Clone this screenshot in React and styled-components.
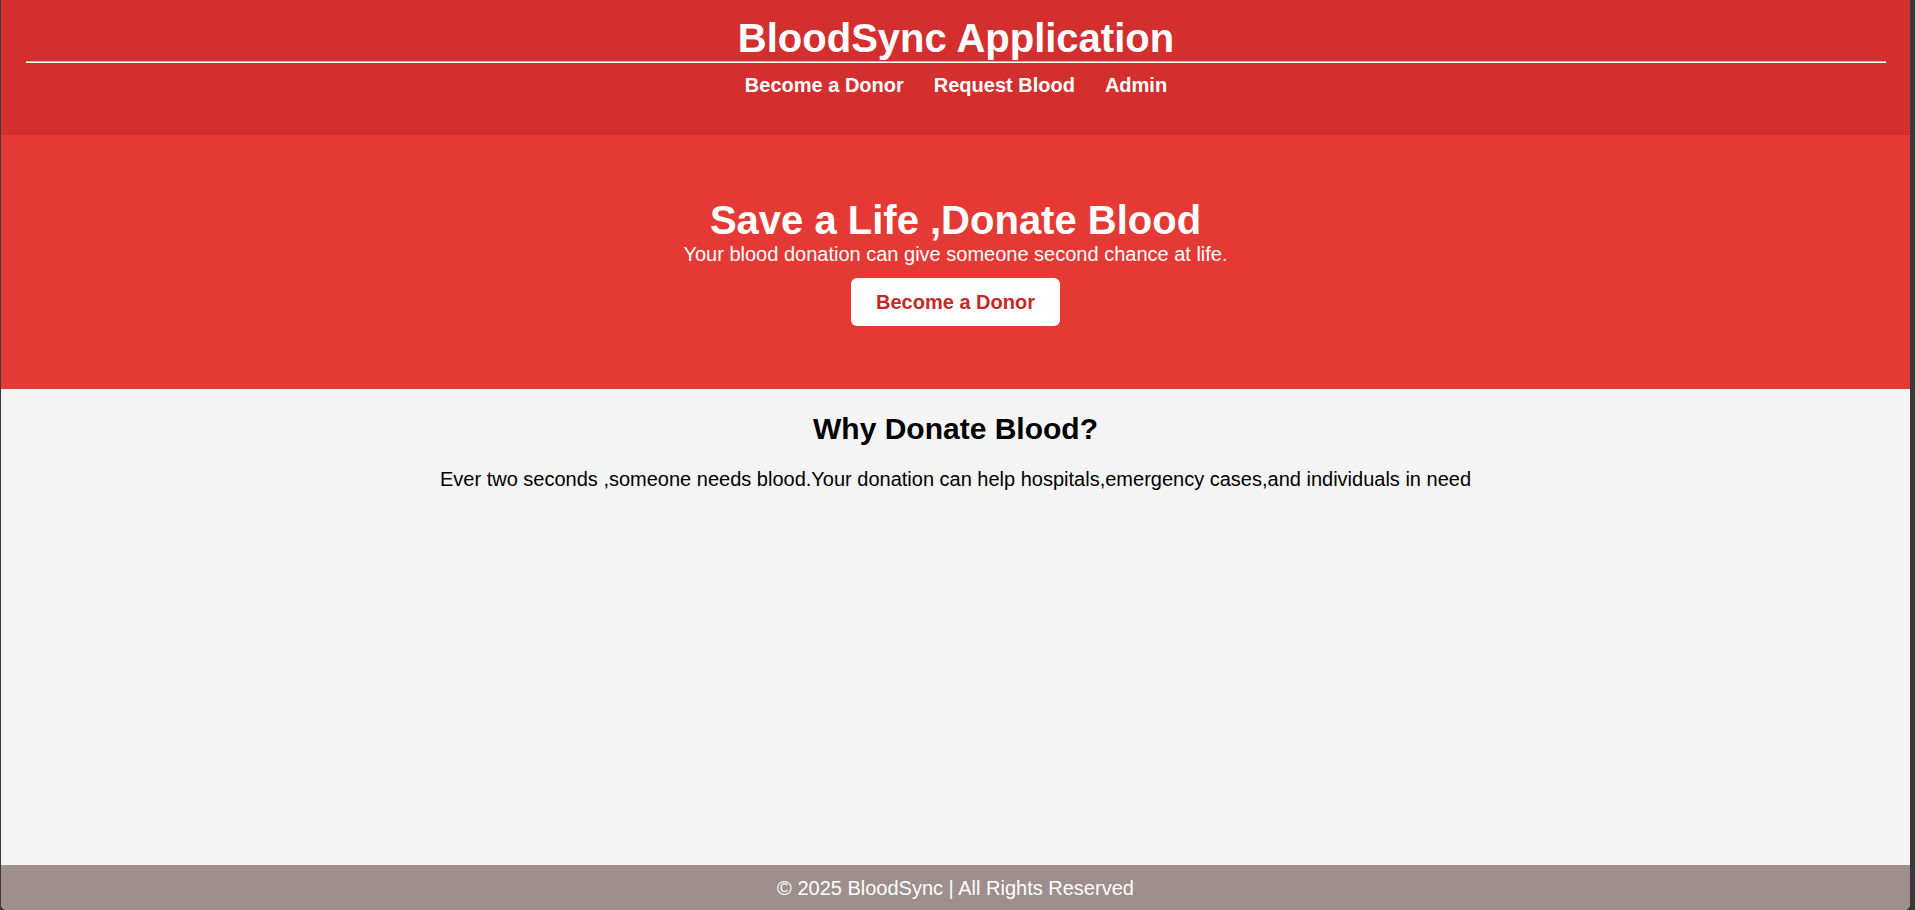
import styled, { createGlobalStyle } from 'styled-components';

const GlobalStyle = createGlobalStyle`
  * {
    box-sizing: border-box;
  }

  html, body {
    margin: 0;
    padding: 0;
    background-color: #3a3a3a;
  }

  body {
    font-family: "Liberation Sans", Arial, sans-serif;
  }
`;

const Page = styled.div`
  display: flex;
  flex-direction: column;
  height: 910px;
  margin: 0 5px 0 1px;
  overflow: hidden;
  border-bottom-left-radius: 6px;
  border-bottom-right-radius: 6px;
  background-color: #f4f4f4;
`;

const Header = styled.header`
  background-color: #d32f2f;
  color: #ffffff;
  padding: 15px 24px 38px 25px;
  text-align: center;
`;

const Title = styled.h1`
  margin: 0;
  font-size: 40px;
  font-weight: bold;
  line-height: 46px;
`;

const Divider = styled.hr`
  margin: 0;
  height: 0;
  border: none;
  border-top: 1px solid #c9b9b9;
  border-bottom: 1px solid #fafafa;
`;

const Nav = styled.nav`
  display: flex;
  justify-content: center;
  gap: 30px;
  margin-top: 11px;
`;

const NavLink = styled.a`
  color: #ffffff;
  font-size: 20px;
  font-weight: bold;
  line-height: 23px;
  text-decoration: none;
  cursor: pointer;
`;

const Hero = styled.section`
  display: flex;
  flex-direction: column;
  align-items: center;
  background-color: #e53935;
  color: #ffffff;
  padding: 62px 0 63px;
  text-align: center;
`;

const HeroTitle = styled.h2`
  margin: 0;
  font-size: 40px;
  font-weight: bold;
  line-height: 46px;
`;

const HeroText = styled.p`
  margin: 0;
  font-size: 20px;
  line-height: 23px;
`;

const DonorButton = styled.button`
  margin-top: 12px;
  padding: 12px 25px;
  border: none;
  border-radius: 6px;
  background-color: #ffffff;
  color: #c62828;
  font-family: inherit;
  font-size: 20px;
  font-weight: bold;
  line-height: 24px;
  cursor: pointer;
`;

const Info = styled.section`
  flex: 1;
  padding-top: 22px;
  text-align: center;
  color: #000000;
`;

const InfoTitle = styled.h2`
  margin: 0;
  font-size: 30px;
  font-weight: bold;
  line-height: 35px;
`;

const InfoText = styled.p`
  margin: 22px 0 0;
  font-size: 20px;
  line-height: 23px;
`;

const Footer = styled.footer`
  background-color: #9e8e8c;
  color: #ffffff;
  padding: 12px 0 10px;
  font-size: 20px;
  line-height: 23px;
  text-align: center;
`;

const links = ['Become a Donor', 'Request Blood', 'Admin'];

export default function App() {
  return (
    <>
      <GlobalStyle />
      <Page>
        <Header>
          <Title>BloodSync Application</Title>
          <Divider />
          <Nav>
            {links.map((link) => (
              <NavLink key={link}>{link}</NavLink>
            ))}
          </Nav>
        </Header>
        <Hero>
          <HeroTitle>Save a Life ,Donate Blood</HeroTitle>
          <HeroText>Your blood donation can give someone second chance at life.</HeroText>
          <DonorButton type="button">Become a Donor</DonorButton>
        </Hero>
        <Info>
          <InfoTitle>Why Donate Blood?</InfoTitle>
          <InfoText>
            Ever two seconds ,someone needs blood.Your donation can help hospitals,emergency cases,and individuals in need
          </InfoText>
        </Info>
        <Footer>© 2025 BloodSync | All Rights Reserved</Footer>
      </Page>
    </>
  );
}
